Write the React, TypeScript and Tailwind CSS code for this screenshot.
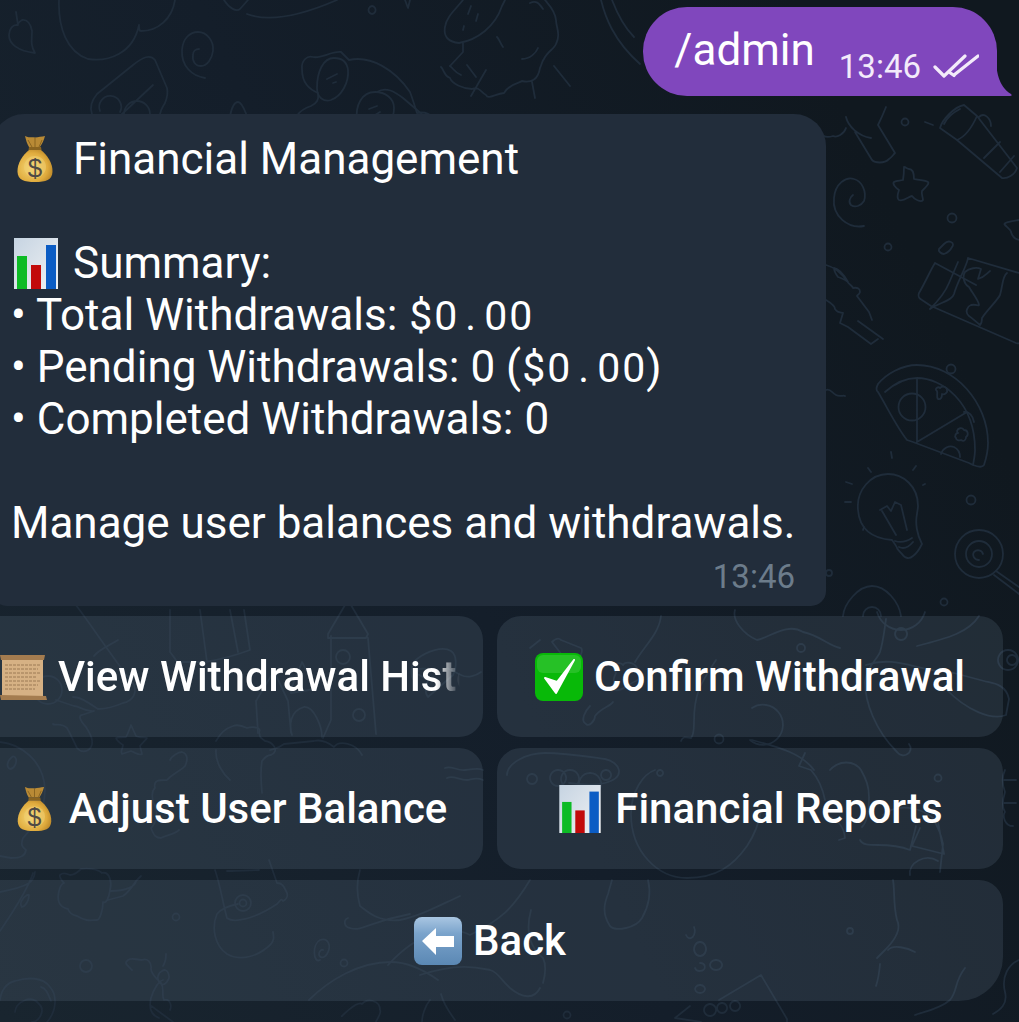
import React from "react";

const MoneyBag = ({ className }: { className: string }) => (
  <svg viewBox="0 0 36 48" className={className}>
    <defs>
      <radialGradient id="bagG" cx="0.4" cy="0.55" r="0.7">
        <stop offset="0" stopColor="#f6d878" />
        <stop offset="0.65" stopColor="#e0ac3e" />
        <stop offset="1" stopColor="#b07c22" />
      </radialGradient>
    </defs>
    <path d="M8 1c4 2 7 1 10 1.500 3-.5 7-1 10-1.500-1 4-3 8-5 11l-11 0C10 9 9 5 8 1z" fill="#b98a35" />
    <path d="M11 5l4 7M18 3v9M25 5l-3 7" stroke="#8a6420" strokeWidth="1" />
    <path d="M12 12h12l.500 3h-13z" fill="#8a6420" />
    <path d="M12 15c-6 5-12 13-11.500 22C1 45 7 47 18 47s17-2 17.500-10C36 28 30 20 24 15z" fill="url(#bagG)" />
    <circle cx="18" cy="32" r="11" fill="#f0cf72" opacity="0.55" />
    <text x="18" y="42" textAnchor="middle" fontSize="26" fontWeight="400" fontFamily="Liberation Sans, sans-serif" fill="#4f4a45">$</text>
  </svg>
);

const Chart = ({ className }: { className: string }) => (
  <svg viewBox="0 0 44 51" className={className}>
    <defs>
      <linearGradient id="chartBg" x1="0" y1="0" x2="1" y2="1">
        <stop offset="0" stopColor="#c6d4e2" />
        <stop offset="1" stopColor="#f0f1f3" />
      </linearGradient>
    </defs>
    <rect width="44" height="51" fill="url(#chartBg)" />
    <rect x="3" y="18" width="10" height="33" fill="#0dbb25" />
    <rect x="17" y="27" width="10" height="24" fill="#c20a0a" />
    <rect x="32" y="7" width="10" height="44" fill="#0b5cc4" />
  </svg>
);

const ScrollEmoji = ({ className }: { className: string }) => (
  <svg viewBox="0 0 47 48" className={className}>
    <rect x="2" y="3" width="41" height="42" fill="#d6b184" />
    <path d="M5 12h35M5 16h33M5 20h35M5 24h32M5 28h35M5 32h33M5 36h30" stroke="#9c7a55" strokeWidth="1" strokeDasharray="3 1" />
    <path d="M0 2l45 0-1 5H1z" fill="#a47c4f" />
    <path d="M0 42l46 1 1 4-46 0z" fill="#a47c4f" />
  </svg>
);

const CheckEmoji = ({ className }: { className: string }) => (
  <svg viewBox="0 0 48 48" className={className}>
    <rect width="48" height="48" rx="8" fill="#08b908" />
    <rect x="2" y="2" width="44" height="18" rx="6" fill="#fff" opacity="0.12" />
    <path d="M10 25l11 15L39 7 22 29z" fill="#fff" stroke="#fff" strokeWidth="2" strokeLinejoin="round" />
  </svg>
);

const BackEmoji = ({ className }: { className: string }) => (
  <svg viewBox="0 0 48 48" className={className}>
    <defs>
      <linearGradient id="backG" x1="0" y1="0" x2="0" y2="1">
        <stop offset="0" stopColor="#a9c6e2" />
        <stop offset="0.35" stopColor="#7aa3cb" />
        <stop offset="1" stopColor="#5b88b4" />
      </linearGradient>
    </defs>
    <rect width="48" height="48" rx="8" fill="url(#backG)" />
    <path d="M8 24L22 11v8h18v11H22v8z" fill="#fff" />
  </svg>
);

const Doodles = () => (
  <svg viewBox="0 0 1019 1022" className="absolute inset-0 w-full h-full" fill="none" stroke="#1f2c3a" strokeWidth="1.800" strokeLinecap="round" strokeLinejoin="round">
    {/* top row */}
    <path d="M59 0c-1 28 8 52 29 59 20 3 45-5 51-34 0 4 0 6 2 6 17 0 31-12 34-31" />
    <path d="M16 12l2 13c-5-1-9 4-9 10 0 9 9 16 26 18-5-8-3-14-3-22-1-7-5-12-10-11-2 1-3 2-5 5" />
    <path d="M205 78c-13-2-24-12-23-28 1-12 8-18 16-18 9 0 16 9 15 19-1 8-6 15-12 15-6 0-9-5-8-11 0-4 3-6 6-6" />
    <path d="M224 0c5 8 12 12 16 9l8-9M247 14c16 6 44 6 90-14M372 6a3.500 4 0 1 0 .1 0zM410 0l-2 8-3-8" />
    <path d="M92 114c-3-8 0-14 5-20l36-29c10-8 17-11 22-5l12 28c1 4 0 10-2 15-3 5-4 6-5 11M153 85l-32 30M100 130l12-8M120 112a11 11 0 1 0-20-1M150 114a13 13 0 0 0-26 0" />
    <path d="M224 126c4-2 4-3 6-10 2-10 5-14 8-14 4 0 7 9 9 14 2 2 10 1 12 3 2 2 0 5-6 12" />
    <path d="M318 93c-9-4-16-10-16-24-1-8 5-14 11-12 8 2 18-6 28-5l8 8c22-5 46 10 61 32 3 8 5 15 7 21 14-3 22 8 22 24M318 93c1 7-1 10-7 13-12 4-19 12-19 26" />
    <path d="M334 58c-11 0-17 14-17 30 0 10 7 14 14 12 11-4 18-18 17-30-1-8-6-12-14-12zM337 74l-10 5M336 82l-3 1M375 92c-13 0-20 13-18 29 2 12 12 16 22 12 9-4 15-14 15-25 0-10-9-16-19-16zM377 106l-8 3M380 112l-5 3" />
    <path d="M377 92c9-6 18 0 26 6l28 24" />
    <path d="M463 0c-7 9-17 17-18 27-2 11 5 15 14 16 18-3 36-16 43-37l3-6M463 43v9l-13 14M464 26l-1 4M471 6l-3 8M478 14l-2 7" />
    <path d="M545 0c3 4 10 10 11 20 0 7 5 14 0 24-2 5-9 8-12 15-2 2-2 5-4 9-2 12-9 15-18 13-2 2-12 2-18 12-9 1-16 7-18 2-5-2-6-9-14-6-8 0-20-5-22-11-7-3-5-7-9-11M467 65l9 12M486 70l-15 26M554 66l16 20M532 82l3 16M450 66c4 3 4 6 11 9" />
    <path d="M530 3c6-3 9 0 13 6M497 37c3 3 3 6 6 10M538 48c-2 5-8 11-16 11" />
    <path d="M601 0c4 16 12 40 39 64M612 0c5 13 11 26 22 37" />
    <circle cx="534" cy="128" r="3.500" />
    {/* right of bubble */}
    <path d="M940 128c2-8 14-21 24-23l13 11c-4 9-10 20-20 24zM940 128l17 12 45 38c5 1 13-3 15-10l-40-52M944 124c3-6 10-12 16-15M979 117c5-5 12 1 12 9M984 158l16-16M1000 172l14-16" />
    <path d="M871 138c-13-2-23-12-25-21M846 128c-2 6-9 10-13 8-9 3-13-2-13-6M855 132l17 28c3 3 12 4 17-1 3-2 4-4 6-6L878 125c3-6 6-13 8-18M925 122l8 3" />
    <circle cx="905" cy="122" r="3.500" />
    <path d="M904 167c2 0 3 2 5 2 2 0 5 1 5 10 4 1 12 1 14 3 2 1-3 6-6 9-1 3 1 6 1 9-2 3-9-1-11-4-3 0-8 6-13 4-3-2-1-7 0-10-3-2-7-6-5-8 3-2 6-1 9-2 1-6 1-13 1-13z" />
    <path d="M864 226c-16 3-32-10-30-28 1-14 12-22 20-19 8 2 13 13 10 22-3 5-9 7-13 4-3-3-1-8 2-10" />
    <circle cx="952" cy="218" r="4.500" />
    <circle cx="888" cy="247" r="3.500" />
    <path d="M935 263c-4 6-10 20-16 30-1 3-1 5 3 7l9 6 85 37c4 1 5 0 6-1M935 263l41 22M930 309c8-8 15-16 19-26l9-21M968 258l51 15M930 309c10-7 22-8 24-15 3-12 13-28 14-36M1007 273c-5 4-4 12-7 22-3 6-13 15-18 23 0 3-1 6-2 7-6-5-8-7-11-9-5-4-1-10 2-11 5-1 7 1 8 0 0-4-8-14-10-18-5-3-7-10-4-15 4-4 12-5 16-3l-3 10c7-2 8-5 12-8" />
    <path d="M944 244c2-2 5-3 7-2 3 1 2 4 1 5-2 4-5 6-8 7-3 0-6-3-5-5z" />
    <path d="M826 265c8 2 16 9 21 16 1 3 5 4 6 7 5-1 7 1 7 4-1 3-3 3-3 4l12 16 3 8M834 268c5 1 10 7 14 14-3-2-6-4-10-5-3-4-4-6-4-9zM826 300c5 3 9 6 9 9 2 3 3 3 8 4l-3 10 8 4 23 17 7-5M858 321l25 18M826 390c4-2 6 3 10 5 3 2 8 0 9 1" />
    <path d="M1019 220c-8 1-17 3-14 5 2 2 6 5 6 7 1 4 4 7 8 8" />
    <circle cx="951" cy="369" r="4.500" />
    <path d="M878 392c-3-2-1-6 0-8 8-10 24-19 39-19 38 0 71 38 71 78 0 8-2 16-4 22-2 3-6 2-11 0l-4-2-56-21-6-2c-11-14-21-35-29-48zM885 392c9-8 20-14 32-14 25 0 58 24 58 72 0 5-1 9-2 15M917 378v64M917 442l50-30" />
    <circle cx="912" cy="407" r="13.500" />
    <path d="M937 391c-3-2 1-5 3-3 3-3 7-1 7 2 1 3-3 5-5 4 0 3-1 6-4 5-2-2 0-5-1-8zM957 431c1-3 5-4 7-1 4 0 5 5 2 7 0 3-2 5-5 3-2 1-5 0-5-2-2-2 0-5 2-5-1-1-1-2-1-2zM941 454c2-6 8-9 13-7 4 2 6 6 6 10M964 412c5-1 9 4 10 10" />
    <path d="M892 540c-13-1-32-6-34-30-2-20 13-36 30-36 15 0 30 12 30 32 0 3-1 6-1 8-2 9 0 21 5 30-2 4-6 10-9 12-3 3-8 3-11-2-2-2-4-4-5-6 0-1-5-8-5-8zM880 510l7-4 4 5 4-9 6 3 6 25M882 511l14 24M899 547c4 2 9 1 14-5M895 541c6 2 11 1 17-3" />
    <path d="M892 458l-1-6M871 472l-3-4M913 470l3-4M852 484l-6-2M851 502l-6 0M923 485l2-1M864 527l-1 3" />
    <circle cx="971" cy="500" r="4.500" />
    <circle cx="979" cy="554" r="24" />
    <circle cx="979" cy="554" r="13" />
    <path d="M979 560c-5 0-7-5-5-8 3-3 8-2 9 2M996 571l23 16M994 575l25 19" />
    <circle cx="944" cy="602" r="3.500" />
    <circle cx="829" cy="573" r="3" />
    <path d="M843 616c1-12 15-30 29-30s27 16 29 30M863 616a9 9 0 1 1 18 0" />
    {/* behind buttons */}
    <path d="M72 600c16 20 35 50 62 85 3 8-1 16-11 18-7 3-16 6-25 6-9-6-17-12-25-12M118 640c-6 4-20 10-24 16" />
    <circle cx="48" cy="690" r="14" />
    <path d="M170 610v42c3 4 5 6 7 10h28c12-2 26-5 45-12l-6-40M200 610l7 52M230 610l8 42M56 700l18 6c6 0 10 6 20 5l-12 4c-4 0-2 6 4 12 5 8 8 14 5 20-3 5-10 6-14 1-4-8-7-15-10-20-6-6-12-2-14-4" />
    <path d="M328 634l20-34 20 34-2 4h-38zM331 636v84M368 638l8 96M331 720l-8 18" />
    <circle cx="343" cy="657" r="7" />
    <circle cx="359" cy="715" r="6" />
    <path d="M291 690c3-10 7-17 11-28 5 9 9 19 13 27l-24 4zM258 733l-2-32 18-30 14 30 3 32M292 735c-3-10-2-24 12-28 10-1 18 20 18 30" />
    <path d="M432 670c-6-2-15-2-18 2 6 4 10 5 14 8-2 6-4 12 0 17l25-22c4-8 4-20-2-24-8-5-24 0-34 8-4 3-8 12-4 20l5-8M447 668l14 7c7 4 16 0 20-3" />
    <path d="M216 741c5-8 8-12 17-15 5-2 10 0 14 2 7-2 15 0 12 4 2 5-2 3 6 9 8 1 15 10 6 14-3 0-6 2-9 6-2 11 0 32 0 32M230 780c-7-6-15-18-14-30M270 750c6-2 9-2 14-6l30-3c8-2 15 2 20 6 5-7 22-4 28 8" />
    <path d="M131 725l5 11c3 2 9 1 11 2-1 2-5 5-7 8l2 8c-2 2-8-2-11-3l-9 3c-2-3 1-6 1-9-3-2-6-4-7-7 3-1 7-1 10-1 2-3 3-7 5-12z" />
    <path d="M0 742c20 2 44 18 45 48-1 28-12 36-22 48-3 8 0 9 3 12-1 6-5 8-15 8l-11-2M12 757c-5 4-6 10-2 12 4 0 7-6 6-10-1-3-3-3-4-2z" />
    <path d="M170 760c2-4 8-8 12-8 6 2 6 8 3 14-3 4-13 8-18 14-8 0-14 0-12 8-5 4-2 10-2 14 4 6 6 18-2 26 3 8 5 10 10 10 6-3 14-4 18-8" />
    <path d="M445 768c6-3 12 3 20 2 8 0 12-3 18 0M447 778c6-3 12 2 20 2 6-1 10-3 16 0" />
    <path d="M562 655l-10-13c4-4 7-4 9-2l20 8c3 3-2 11-6 13M530 648l10-8" />
    <path d="M614 690c8 2 14-6 22-9 6-3 3-9 1-13-3-6-12-7-14-3-1-2-6-3-8 0-2 2-1 5 1 8-2 4-3 7-2 9-1 3-1 5 0 8zM590 706c-5 5-10 15-4 18 3 3 9-3 9-8 6-8 16-10 18-14" />
    <path d="M661 616c-2 18-17 30-26 46M716 660c-14 22-22 31-22 62 0 5 0 13-3 16-3 0-8-3-10 3M750 740a20 20 0 1 0 2-32" />
    <path d="M735 610c-3 10 8 24 22 30 12-2 30-18 46-8 16 3 26 14 37 16" />
    <circle cx="801" cy="648" r="4" />
    <circle cx="719" cy="739" r="4.500" />
    <path d="M886 619c-2 14-3 24-6 33-3 8-13 14-15 30 0 20 10 48 32 70 6 8 18 0 12-8M866 665c30-10 50 6 88 8l30 8c6 2 22 2 25 18l-3 16c-14 6-40-5-60-26M979 616c-10 16-30 22-62 30" />
    <path d="M925 612a25 25 0 0 1-48 0M901 628a6 6 0 1 0 .1 0z" />
    <path d="M1008 650a10 10 0 1 0 .1 0M1012 655a5 5 0 1 0 .1 0" />
    <path d="M507 775c0-12 20-22 38-22 20 0 45 4 60 6 15 3 22 18 0 24-8 2-22 2-36 0M532 774a5 5 0 1 0 .1 0M558 770a8 8 0 1 0 .1 0M570 770a9 9 0 1 0 .1 0M590 773a11 11 0 1 0 .1 0M606 770a5 5 0 1 0 .1 0M660 770a3 3 0 1 0 .1 0" />
    <path d="M655 770c-12 4-24 22-24 44 0 38 27 64 56 64 29 0 46-12 60-32 8-12 12-22 14-36M752 740c30 8 50 14 62 30" />
    <path d="M805 753l-6 13 12 4c7 8 12 20 14 30M830 770c9-10 24-10 31 0 5 9 8 16 8 27 0 15-3 26-7 30M828 816c8 3 16 10 17 22l-6 2" />
    <circle cx="938" cy="778" r="3.500" />
    <path d="M1005 770c-3 6-3 14 0 22-3 10-3 16 0 20-3 4 0 14 8 14M1016 780h-13M1016 803h-13" />
    <path d="M860 840c5 10 25 0 50 10l6-24M883 815c14-12 37-8 50 3 6 12 8 16 10 26l-3 28M920 828l-8 18 32 8-6-32M910 875c-2-12 15-22 28-14" />
    <path d="M0 892c30-6 34-10 35-20M33 873c-5 16-18 36-33 58M27 895c-5 3-8 9-5 12 4-1 7-7 7-12z" />
    <path d="M60 875c3-3 8-1 10 0 4 0 7-2 11-6 7-1 17 0 21 4 8-2 10 10 8 17-1 8-4 14-7 12 0 7-3 18-6 18-6 0-10 2-20-4-5-1-8-4-9-7-10-2-11-10-9-18 1-4 2-7 5-8-3-3-5-7-4-8zM111 891c15 0 25-5 25-10l5-5c-6 4-9 14-18 20l-15 4" />
    <path d="M215 870c5 14 8 34 12 48 6 5 26 2 50-14 4-4 4-6 6-3 4-2 5-4 4-8-3-6-4-10-10-10l-8-23M227 871c14 0 27-1 32-1M238 904c-10 2-18 6-21 10-6 14-2 32 10 40 14 8 32 2 44-10 3-4 3-6 2-12" />
    <circle cx="243" cy="903" r="8" />
    <circle cx="243" cy="903" r="3.500" />
    <path d="M360 870c-3 10-4 22 0 36 10 8 20 16 40 14 20-4 38-14 60-24M348 918c-5 2-4 9 2 10 12 4 18-6 60-14" />
    <path d="M320 960c-7 4-8-16 0-20 8-3 12 6 7 14-3 5-8 4-8 0 0-3 3-5 4-4" />
    <circle cx="344" cy="963" r="3.500" />
    <circle cx="176" cy="917" r="3.500" />
    <circle cx="86" cy="966" r="6" />
    <path d="M132 970c-6-6-8-7-4-10 4-3 8 0 14 0 5-2 10 2 9 9 0 5 6 10 10 14 4 6 0 12 3 17 6-2 8 6 6 10M163 980c-4 1-9 8-12 18-2 8-2 16 8 20M163 966c2-3 3-5 3-12M165 970c4 1 5 8 3 10-2 4-5 6-8 3-4-4-2-10 2-12 1-1 2-1 3-1M150 1005l23 17" />
    <path d="M0 1000c1-9 6-17 15-19 13-4 28-4 35 6 8 9 6 25-3 35M15 1012c1-10 16-18 24-8 7 6 0 18-7 18M41 987c5 1 7 7 10 14" />
    <path d="M309 1000c20-20 50-38 82-38 16 0 30 6 47 18M342 1016c-3 3 15-16 20-12 5-6 18-4 18 6 2 4-4 10-4 12" />
    <path d="M530 880c-18 30-30 40-60 55-18-10-50-5-82 30M531 910c-6 22 0 38 12 48 3 6 3 14 0 25M540 988c-6 12-18 10-30 0-9-8-12-16-20-18-10-2-30-8-70 5M430 1000c-5 6-8 16-8 22M455 1020c-6-8-12-18-14-26" />
    <circle cx="567" cy="1015" r="3.500" />
    <path d="M612 880l-4 14c-4 10-6 20 2 32 6 6 26 2 32-8 8-14 9-26 6-38" />
    <path d="M686 935a4 6 0 1 0 8-8M700 942a6 7 0 1 0 .1 0M695 968a5 4 0 1 0 5-5M716 960a6 5 0 1 0 .1 0M700 985a5 4 0 1 0 .1 0" />
    <path d="M690 1006l-15 12 26 4M719 1000l42-25 26 44v3M710 1004a6 6 0 1 0 .1 0M722 1003a5 5 0 1 0 .1 0M735 1001a5 5 0 1 0 .1 0" />
    <circle cx="850" cy="931" r="3" />
    <path d="M893 880c2 12 0 24 4 40 4 8 0 18-12 30l-8 8M888 950c5-6 20-2 27 2M880 964c-1 12-2 16-4 22" />
    <path d="M1019 960c-10 4-18 16-14 32 3 12-5 18-12 22M915 1015c8-3 25-6 35-15 8-10 4-18 15-32" />
  </svg>
);

const rowBtn = "flex items-center justify-center h-[121px] rounded-[24px] bg-[#697d93]/20 text-white text-[42px] font-medium leading-none overflow-hidden whitespace-nowrap";

const Mono = () => (
  <span>
    {"$0.00".split("").map((c, i) => (
      <span key={i} className="inline-block w-[25px] text-center text-[41px] leading-[41px]">{c}</span>
    ))}
  </span>
);

export default function App() {
  return (
    <div className="relative w-[1019px] h-[1022px] overflow-hidden bg-[linear-gradient(65deg,#19252f_0%,#141e2a_45%,#10181f_85%)] font-['Roboto',sans-serif] text-white">
      <Doodles />
      <div className="relative flex flex-col pt-[7px]">
        {/* outgoing */}
        <div className="flex justify-end pr-[22px]">
          <div className="relative flex h-[89px] items-start rounded-l-[44px] rounded-tr-[44px] bg-[#8047bd] pl-[31px] pr-[18px]">
            <span className="mt-[15px] text-[44px] leading-[56px]">/admin</span>
            <span className="ml-[24px] mt-[39px] text-[33px] leading-[42px] text-[#f3ebfa]">13:46</span>
            <svg viewBox="0 0 46 26" className="ml-[12px] mt-[47px] h-[26px] w-[46px]" fill="none" stroke="#f3ebfa" strokeWidth="3.200" strokeLinecap="round" strokeLinejoin="round">
              <path d="M2 13l9 9L32 2M21 21L45 2" />
              <path d="M16 18l5 3.500" />
            </svg>
            <svg viewBox="0 0 16 40" className="absolute bottom-0 right-[-15px] h-[40px] w-[16px]">
              <path d="M0 0c0 14 2 30 15 38 1 1 1 2-1 2H0z" fill="#8047bd" />
            </svg>
          </div>
        </div>

        {/* incoming */}
        <div className="ml-[-8px] mt-[18px] h-[492px] w-[834px] rounded-t-[32px] rounded-b-[15px] bg-[#222d3b] pl-[19px] pt-[19px] text-[44px] leading-[52px]">
          <div className="flex h-[52px] items-center">
            <MoneyBag className="ml-[6px] mr-[20px] h-[48px] w-[36px]" />
            <span>Financial Management</span>
          </div>
          <div className="h-[52px]" />
          <div className="flex h-[52px] items-center">
            <Chart className="ml-[3px] mr-[15px] h-[51px] w-[44px]" />
            <span>Summary:</span>
          </div>
          <div className="h-[52px]">
            • Total Withdrawals: <Mono />
          </div>
          <div className="h-[52px]">
            • Pending Withdrawals: 0 (<Mono />)
          </div>
          <div className="h-[52px]">• Completed Withdrawals: 0</div>
          <div className="h-[52px]" />
          <div className="h-[52px]">Manage user balances and withdrawals.</div>
          <div className="flex justify-end pr-[31px] pt-[8px] text-[33px] leading-[40px] text-[#6c7c8b]">13:46</div>
        </div>

        {/* keyboard */}
        <div className="ml-[-23px] mt-[10px] grid w-[1026px] grid-cols-2 gap-x-[14px] gap-y-[11px]">
          <div className={rowBtn + " justify-start pl-[23px]"}>
            <ScrollEmoji className="mr-[11px] h-[48px] w-[47px] shrink-0" />
            <span className="w-[402px] overflow-hidden [mask-image:linear-gradient(to_right,black_94%,transparent_100%)]">View Withdrawal History</span>
          </div>
          <div className={rowBtn}>
            <CheckEmoji className="mr-[11px] h-[48px] w-[48px]" />
            <span>Confirm Withdrawal</span>
          </div>
          <div className={rowBtn + " pl-[4px]"}>
            <MoneyBag className="mr-[17px] h-[46px] w-[35px]" />
            <span>Adjust User Balance</span>
          </div>
          <div className={rowBtn + " pl-[2px]"}>
            <Chart className="mr-[14px] h-[48px] w-[42px]" />
            <span>Financial Reports</span>
          </div>
          <div className={rowBtn + " col-span-2 rounded-br-[44px]"}>
            <BackEmoji className="mr-[11px] h-[48px] w-[48px]" />
            <span>Back</span>
          </div>
        </div>
      </div>
    </div>
  );
}
